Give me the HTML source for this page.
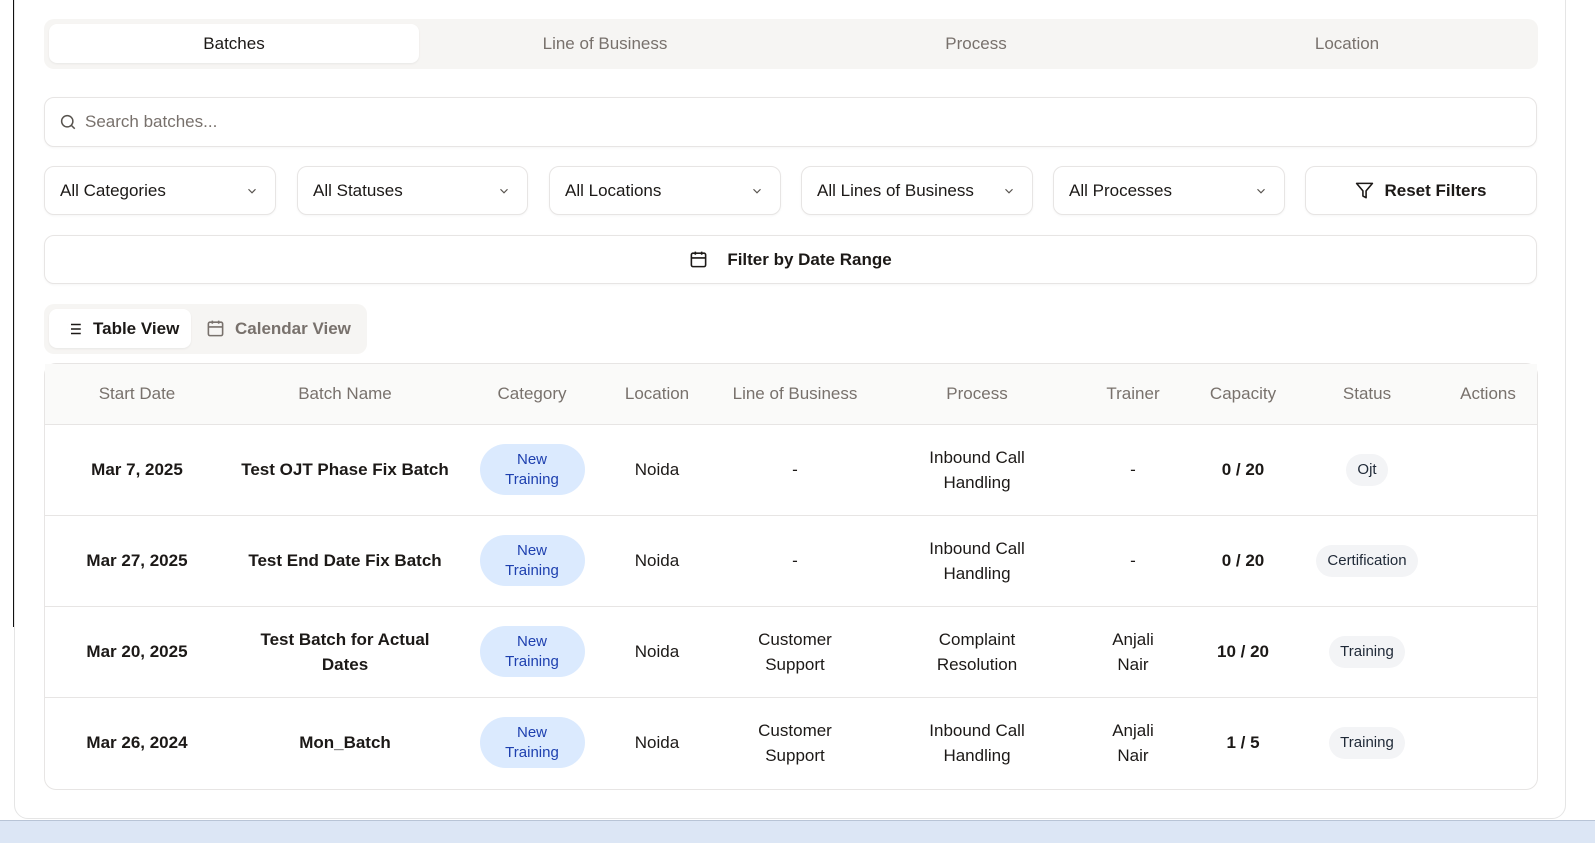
<!DOCTYPE html>
<html><head><style>
*{box-sizing:border-box;margin:0;padding:0}
body{width:1595px;height:843px;overflow:hidden;background:#fff;font-family:"Liberation Sans",sans-serif;color:#1c1917;position:relative}
.abs{position:absolute}
.box{position:absolute;border:1px solid #e7e5e4;border-radius:10px;background:#fff;box-shadow:0 1px 2px rgba(0,0,0,.04)}
.sel{display:flex;align-items:center;justify-content:space-between;padding:0 16px 0 15px;font-size:17px;color:#1c1917}
.tab{position:absolute;top:24px;height:39px;display:flex;align-items:center;justify-content:center;font-size:17px;color:#78716c}
table{position:absolute;left:45px;top:364px;border-collapse:collapse;table-layout:fixed;width:1492px}
th{height:60px;font-weight:normal;color:#78716c;font-size:17px;background:#fafaf9;border-bottom:1px solid #e7e5e4}
td{height:91px;text-align:center;font-size:17px;border-bottom:1px solid #e7e5e4;line-height:25px}
tr:last-child td{border-bottom:none}
.b{font-weight:bold}
.cat{display:inline-block;width:105px;height:51px;border-radius:26px;background:#dbeafe;color:#1e40af;font-size:15px;line-height:20px;padding-top:6px}
.st{display:inline-block;padding:0 11px;height:32px;line-height:32px;border-radius:16px;background:#f3f4f6;color:#1f2937;font-size:15px}
</style></head><body>
<div class="abs" style="left:13px;top:0;width:1px;height:627px;background:#111"></div>
<div class="abs" style="left:14px;top:-20px;width:1552px;height:839px;border:1px solid #e5e5e5;border-radius:14px;"></div>
<div class="abs" style="left:0;top:820px;width:1595px;height:23px;background:#dce6f5;border-top:1px solid #b8c4d6"></div>

<div class="abs" style="left:44px;top:19px;width:1494px;height:50px;background:#f6f5f3;border-radius:10px"></div>
<div class="tab" style="left:49px;width:370px;background:#fff;border-radius:8px;color:#1c1917;box-shadow:0 1px 2px rgba(0,0,0,.06)">Batches</div>
<div class="tab" style="left:420px;width:370px">Line of Business</div>
<div class="tab" style="left:791px;width:370px">Process</div>
<div class="tab" style="left:1162px;width:370px">Location</div>

<div class="box" style="left:44px;top:97px;width:1493px;height:50px;display:flex;align-items:center;padding-left:14px;font-size:17px;color:#78716c">
<svg width="18" height="18" viewBox="0 0 24 24" fill="none" stroke="#57534e" stroke-width="2"><circle cx="11" cy="11" r="7.5"/><path d="M21 21l-4.5-4.5"/></svg>
<span style="margin-left:8px">Search batches...</span></div>

<div class="box sel" style="left:44px;top:166px;width:232px;height:49px">All Categories<svg width="14" height="14" viewBox="0 0 24 24" fill="none" stroke="#57534e" stroke-width="2"><path d="M6 9l6 6 6-6"/></svg></div>
<div class="box sel" style="left:297px;top:166px;width:231px;height:49px">All Statuses<svg width="14" height="14" viewBox="0 0 24 24" fill="none" stroke="#57534e" stroke-width="2"><path d="M6 9l6 6 6-6"/></svg></div>
<div class="box sel" style="left:549px;top:166px;width:232px;height:49px">All Locations<svg width="14" height="14" viewBox="0 0 24 24" fill="none" stroke="#57534e" stroke-width="2"><path d="M6 9l6 6 6-6"/></svg></div>
<div class="box sel" style="left:801px;top:166px;width:232px;height:49px">All Lines of Business<svg width="14" height="14" viewBox="0 0 24 24" fill="none" stroke="#57534e" stroke-width="2"><path d="M6 9l6 6 6-6"/></svg></div>
<div class="box sel" style="left:1053px;top:166px;width:232px;height:49px">All Processes<svg width="14" height="14" viewBox="0 0 24 24" fill="none" stroke="#57534e" stroke-width="2"><path d="M6 9l6 6 6-6"/></svg></div>
<div class="box" style="left:1305px;top:166px;width:232px;height:49px;display:flex;align-items:center;justify-content:center;font-size:17px;font-weight:bold">
<svg width="19" height="19" viewBox="0 0 24 24" fill="none" stroke="#1c1917" stroke-width="2" stroke-linejoin="round"><path d="M22 3H2l8 9.46V19l4 2v-8.54L22 3z"/></svg><span style="margin-left:10px">Reset Filters</span></div>

<div class="box" style="left:44px;top:235px;width:1493px;height:49px;display:flex;align-items:center;justify-content:center;font-size:17px;font-weight:bold">
<svg width="19" height="19" viewBox="0 0 24 24" fill="none" stroke="#1c1917" stroke-width="2"><rect x="3" y="4" width="18" height="17" rx="2"/><path d="M16 2v4M8 2v4M3 10h18"/></svg><span style="margin-left:19px">Filter by Date Range</span></div>

<div class="abs" style="left:44px;top:304px;width:323px;height:50px;background:#f6f5f3;border-radius:10px"></div>
<div class="abs" style="left:49px;top:309px;width:142px;height:39px;background:#fff;border-radius:8px;display:flex;align-items:center;padding-left:16px;font-size:17px;font-weight:bold;box-shadow:0 1px 2px rgba(0,0,0,.06)">
<svg width="18" height="18" viewBox="0 0 24 24" fill="none" stroke="#1c1917" stroke-width="2"><path d="M8 6h13M8 12h13M8 18h13M3 6h.01M3 12h.01M3 18h.01"/></svg><span style="margin-left:10px">Table View</span></div>
<div class="abs" style="left:206px;top:309px;height:39px;display:flex;align-items:center;font-size:17px;font-weight:bold;color:#78716c">
<svg width="19" height="19" viewBox="0 0 24 24" fill="none" stroke="#78716c" stroke-width="2"><rect x="3" y="4" width="18" height="17" rx="2"/><path d="M16 2v4M8 2v4M3 10h18"/></svg><span style="margin-left:10px">Calendar View</span></div>

<div class="abs" style="left:44px;top:363px;width:1494px;height:427px;border:1px solid #e7e5e4;border-radius:12px;overflow:hidden"></div>
<table>
<colgroup><col style="width:184px"><col style="width:232px"><col style="width:142px"><col style="width:108px"><col style="width:168px"><col style="width:196px"><col style="width:116px"><col style="width:104px"><col style="width:144px"><col style="width:98px"></colgroup>
<tr><th>Start Date</th><th>Batch Name</th><th>Category</th><th>Location</th><th>Line of Business</th><th>Process</th><th>Trainer</th><th>Capacity</th><th>Status</th><th>Actions</th></tr>
<tr><td class="b">Mar 7, 2025</td><td class="b">Test OJT Phase Fix Batch</td><td><span class="cat">New<br>Training</span></td><td>Noida</td><td>-</td><td>Inbound Call<br>Handling</td><td>-</td><td class="b">0 / 20</td><td><span class="st">Ojt</span></td><td></td></tr>
<tr><td class="b">Mar 27, 2025</td><td class="b">Test End Date Fix Batch</td><td><span class="cat">New<br>Training</span></td><td>Noida</td><td>-</td><td>Inbound Call<br>Handling</td><td>-</td><td class="b">0 / 20</td><td><span class="st">Certification</span></td><td></td></tr>
<tr><td class="b">Mar 20, 2025</td><td class="b">Test Batch for Actual<br>Dates</td><td><span class="cat">New<br>Training</span></td><td>Noida</td><td>Customer<br>Support</td><td>Complaint<br>Resolution</td><td>Anjali<br>Nair</td><td class="b">10 / 20</td><td><span class="st">Training</span></td><td></td></tr>
<tr><td class="b">Mar 26, 2024</td><td class="b">Mon_Batch</td><td><span class="cat">New<br>Training</span></td><td>Noida</td><td>Customer<br>Support</td><td>Inbound Call<br>Handling</td><td>Anjali<br>Nair</td><td class="b">1 / 5</td><td><span class="st">Training</span></td><td></td></tr>
</table>
</body></html>
